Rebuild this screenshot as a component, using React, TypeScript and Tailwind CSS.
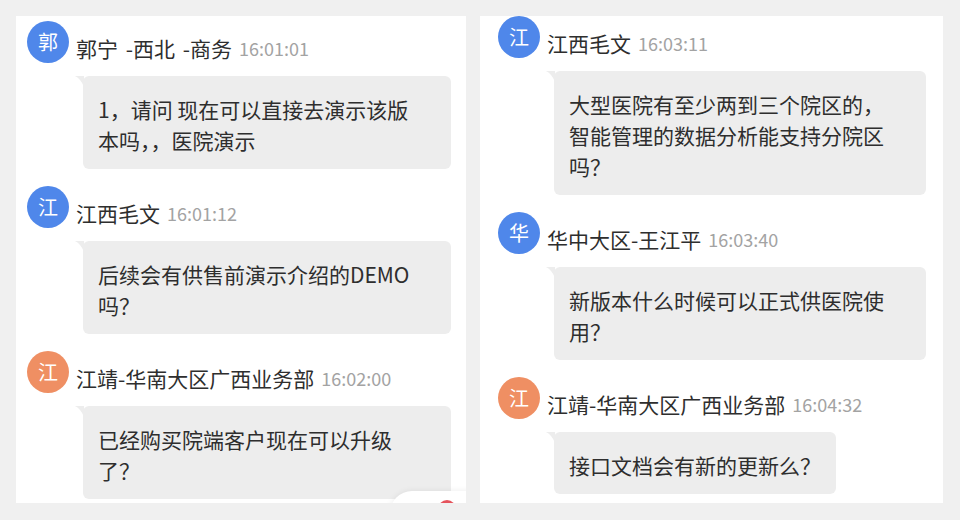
type Msg = {
  avatar: string;
  color: string;
  name: string;
  time: string;
  lines: string[];
  fit?: boolean;
};

const leftMsgs: Msg[] = [
  {
    avatar: "郭",
    color: "bg-[#4f87ea]",
    name: "郭宁 -西北 -商务",
    time: "16:01:01",
    lines: ["1，请问 现在可以直接去演示该版", "本吗，，医院演示"],
  },
  {
    avatar: "江",
    color: "bg-[#4f87ea]",
    name: "江西毛文",
    time: "16:01:12",
    lines: ["后续会有供售前演示介绍的DEMO", "吗？"],
  },
  {
    avatar: "江",
    color: "bg-[#ef8f63]",
    name: "江靖-华南大区广西业务部",
    time: "16:02:00",
    lines: ["已经购买院端客户现在可以升级", "了？"],
  },
];

const rightMsgs: Msg[] = [
  {
    avatar: "江",
    color: "bg-[#4f87ea]",
    name: "江西毛文",
    time: "16:03:11",
    lines: ["大型医院有至少两到三个院区的，", "智能管理的数据分析能支持分院区", "吗？"],
  },
  {
    avatar: "华",
    color: "bg-[#4f87ea]",
    name: "华中大区-王江平",
    time: "16:03:40",
    lines: ["新版本什么时候可以正式供医院使", "用？"],
  },
  {
    avatar: "江",
    color: "bg-[#ef8f63]",
    name: "江靖-华南大区广西业务部",
    time: "16:04:32",
    lines: ["接口文档会有新的更新么？"],
    fit: true,
  },
];

function Message({ m, bubbleW }: { m: Msg; bubbleW: string }) {
  return (
    <div className="flex flex-col">
      <div className="flex items-start h-[42px]">
        <div
          className={`${m.color} w-[42px] h-[42px] rounded-full flex items-center justify-center text-white text-[20px] shrink-0`}
        >
          {m.avatar}
        </div>
        <div className="ml-[7px] mt-[12px] h-[30px] leading-[30px] whitespace-nowrap flex items-center">
          <span className="text-[21px] text-[#2e2e2e] [word-spacing:3px]">{m.name}</span>
          <span className="ml-[7px] text-[18px] text-[#a3a3a3]">{m.time}</span>
        </div>
      </div>
      <div
        className={`relative mt-[13px] ml-[56px] bg-[#ededed] rounded-[6px] pl-[15px] pr-[15px] pt-[18px] pb-[13px] text-[21px] leading-[31px] text-[#2e2e2e] ${
          m.fit ? "self-start" : bubbleW
        }`}
      >
        <svg
          className="absolute left-[-8px] top-0"
          width="9"
          height="11"
          viewBox="0 0 9 11"
        >
          <path d="M0 0 L9 0 L9 11 Q6 3 0 0 Z" fill="#ededed" />
        </svg>
        {m.lines.map((l, i) => (
          <div key={i} className="whitespace-nowrap">
            {l}
          </div>
        ))}
      </div>
    </div>
  );
}

export default function App() {
  return (
    <div
      className="w-[960px] h-[520px] bg-[#f0f0f0] flex items-start pt-[16px]"
      style={{ fontFamily: '"Noto Sans CJK SC", "Noto Sans", sans-serif' }}
    >
      <div className="relative ml-[16px] w-[450px] h-[487px] bg-white overflow-hidden pt-[5px] pl-[11px]">
        <div className="flex flex-col gap-[17px]">
          {leftMsgs.map((m, i) => (
            <Message key={i} m={m} bubbleW="w-[368px]" />
          ))}
        </div>
        <div className="absolute left-[374px] top-[475px] w-[110px] h-[44px] rounded-full bg-white shadow-[0_0_6px_rgba(0,0,0,0.08)]">
          <div className="absolute left-[48px] top-[9px] w-[18px] h-[18px] rounded-full bg-[#e5535c]" />
        </div>
      </div>
      <div className="ml-[14px] w-[463px] h-[487px] bg-white overflow-hidden pl-[18px]">
        <div className="flex flex-col gap-[17px]">
          {rightMsgs.map((m, i) => (
            <Message key={i} m={m} bubbleW="w-[372px]" />
          ))}
        </div>
      </div>
    </div>
  );
}
